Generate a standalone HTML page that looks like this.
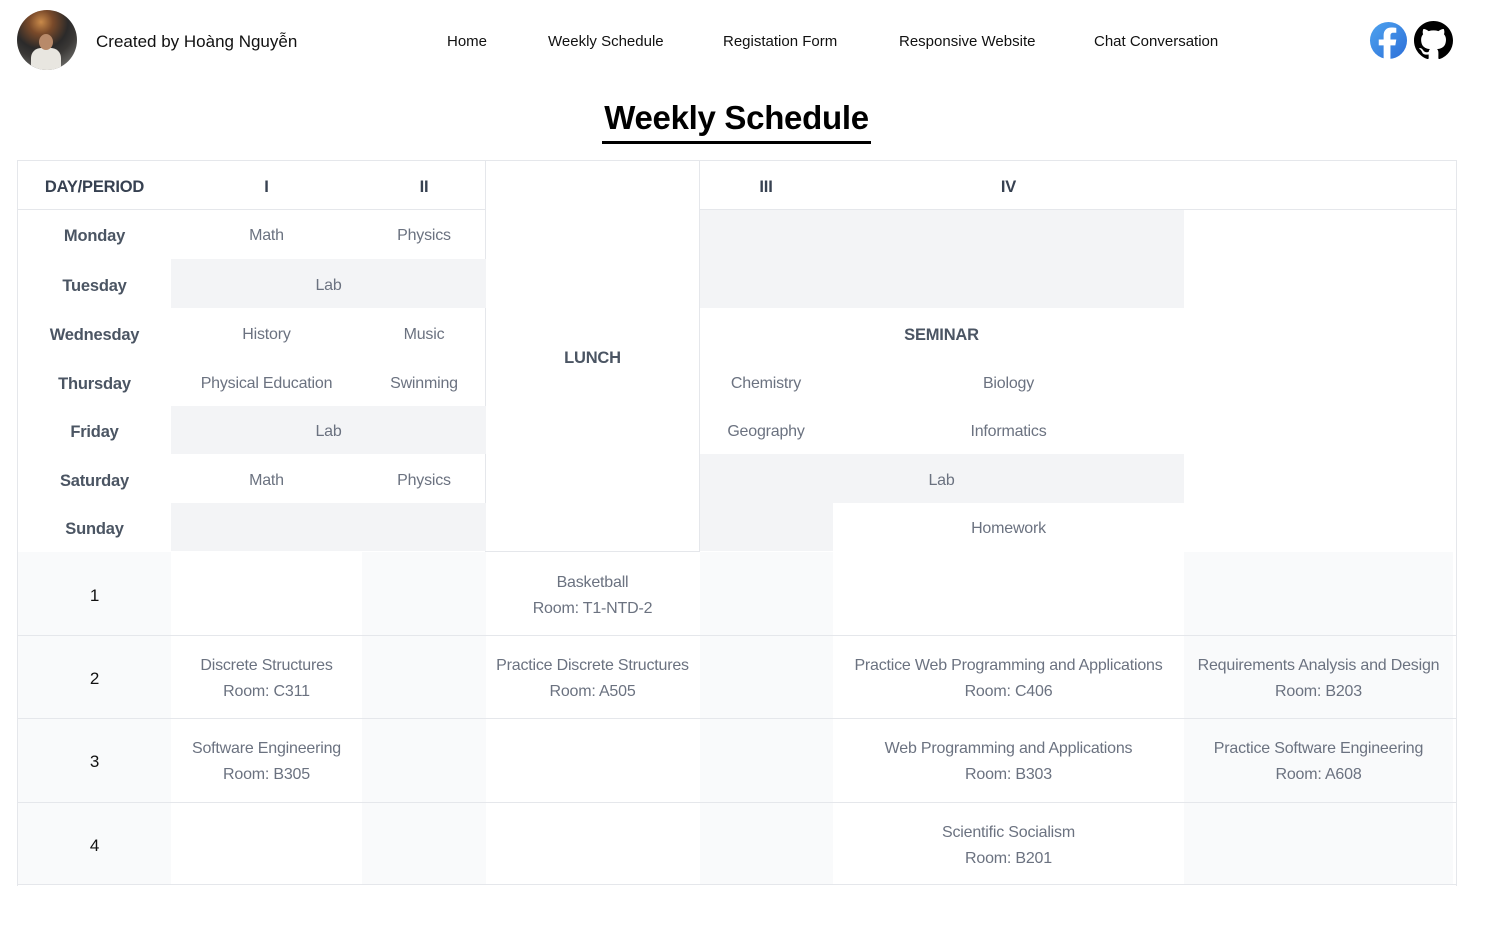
<!DOCTYPE html>
<html><head><meta charset="utf-8">
<style>
*{margin:0;padding:0;box-sizing:border-box}
body{width:1492px;height:926px;background:#fff;font-family:"Liberation Sans",sans-serif;position:relative;overflow:hidden;color:#111}
.a{position:absolute}
.c{position:absolute;display:flex;align-items:center;justify-content:center;text-align:center;flex-direction:column;color:#6b7280;font-size:16px;line-height:26px;letter-spacing:-0.2px;padding-top:4px}
.b{font-weight:bold;color:#4b5563;font-size:16.5px}
.h{font-weight:bold;color:#374151;font-size:16.5px}
.g{background:#f3f4f6}
.l{background:#f9fafb}
.nav{position:absolute;top:33px;font-size:15px;color:#111}
</style></head><body>
<div class="a" style="left:17px;top:10px;width:60px;height:60px;border-radius:50%;background:radial-gradient(circle at 40% 20%,#c98a4a 0,#7a4a2a 20%,#2b2a2a 45%,#3a3836 60%,#8a8a86 100%);overflow:hidden">
 <div class="a" style="left:14px;top:38px;width:30px;height:24px;border-radius:10px 10px 0 0;background:#e8e6e0"></div>
 <div class="a" style="left:22px;top:24px;width:14px;height:16px;border-radius:50%;background:#b88a6a"></div>
</div>
<div class="a" style="left:96px;top:32px;font-size:17px;color:#111">Created by Hoàng Nguyễn</div>
<div class="nav" style="left:447px">Home</div>
<div class="nav" style="left:548px">Weekly Schedule</div>
<div class="nav" style="left:723px">Registation Form</div>
<div class="nav" style="left:899px">Responsive Website</div>
<div class="nav" style="left:1094px">Chat Conversation</div>
<svg class="a" style="left:1369px;top:21px" width="39" height="39" viewBox="0 0 40 40"><defs><linearGradient id="fb" x1="0" y1="0" x2="1" y2="1"><stop offset="0" stop-color="#4ea3ef"/><stop offset="1" stop-color="#2d6fd8"/></linearGradient></defs><circle cx="20" cy="20" r="19" fill="url(#fb)"/><path d="M22 40V25h5l1-6h-6v-4c0-2 1-3 3-3h3V7c-1 0-3-.3-5-.3-5 0-8 3-8 8V19h-5v6h5v15z" fill="#fff"/></svg>
<svg class="a" style="left:1414px;top:21px" width="39" height="39" viewBox="0 0 16 16"><path fill="#000" d="M8 0C3.58 0 0 3.580 0 8c0 3.54 2.29 6.53 5.47 7.590.4.07.55-.17.55-.38 0-.19-.01-.82-.01-1.49-2.01.37-2.53-.49-2.690-.94-.09-.23-.48-.94-.82-1.13-.28-.15-.68-.52-.01-.53.63-.01 1.08.58 1.230.82.72 1.21 1.87.87 2.330.66.07-.52.28-.87.51-1.07-1.78-.2-3.64-.89-3.64-3.95 0-.87.31-1.59.82-2.15-.08-.2-.36-1.02.08-2.12 0 0 .67-.21 2.2.82.64-.18 1.32-.27 2-.27.68 0 1.36.09 2 .27 1.53-1.04 2.2-.82 2.2-.82.44 1.1.16 1.92.08 2.12.51.56.82 1.27.82 2.15 0 3.07-1.87 3.75-3.65 3.95.29.25.54.73.54 1.48 0 1.07-.01 1.93-.01 2.2 0 .21.15.46.55.38A8.013 8.013 0 0016 8c0-4.42-3.58-8-8-8z"/></svg>
<div class="a" style="left:596px;top:99px;width:281px;text-align:center;font-size:33px;font-weight:bold;color:#000;letter-spacing:-0.3px">Weekly Schedule</div>
<div class="a" style="left:602px;top:141px;width:269px;height:3px;background:#000"></div>

<div class="a" style="left:17px;top:160px;width:1440px;height:726px;border:1px solid #e5e7eb;border-bottom:none"></div>
<div class="a" style="left:18px;top:209px;width:468px;height:1px;background:#e5e7eb"></div>
<div class="a" style="left:699px;top:209px;width:757px;height:1px;background:#e5e7eb"></div>
<div class="a" style="left:485px;top:161px;width:215px;height:391px;border-left:1px solid #e5e7eb;border-right:1px solid #e5e7eb;border-bottom:1px solid #e5e7eb"></div>

<div class="a g" style="left:171px;top:259px;width:315px;height:49px"></div>
<div class="a g" style="left:171px;top:406px;width:315px;height:48px"></div>
<div class="a g" style="left:171px;top:503px;width:315px;height:48px"></div>
<div class="a g" style="left:700px;top:210px;width:484px;height:98px"></div>
<div class="a g" style="left:700px;top:454px;width:484px;height:49px"></div>
<div class="a g" style="left:700px;top:503px;width:133px;height:48px"></div>
<div class="a l" style="left:18px;top:552px;width:153px;height:333px"></div>
<div class="a l" style="left:362px;top:552px;width:124px;height:333px"></div>
<div class="a l" style="left:700px;top:552px;width:133px;height:333px"></div>
<div class="a l" style="left:1184px;top:552px;width:269px;height:333px"></div>
<div class="a" style="left:18px;top:635px;width:1438px;height:1px;background:#e5e7eb"></div>
<div class="a" style="left:18px;top:718px;width:1438px;height:1px;background:#e5e7eb"></div>
<div class="a" style="left:18px;top:802px;width:1438px;height:1px;background:#e5e7eb"></div>
<div class="a" style="left:18px;top:884px;width:1438px;height:1px;background:#e5e7eb"></div>

<div class="c h" style="left:18px;top:161px;width:153px;height:48px">DAY/PERIOD</div>
<div class="c h" style="left:171px;top:161px;width:191px;height:48px">I</div>
<div class="c h" style="left:362px;top:161px;width:124px;height:48px">II</div>
<div class="c h" style="left:699px;top:161px;width:134px;height:48px">III</div>
<div class="c h" style="left:833px;top:161px;width:351px;height:48px">IV</div>
<div class="c b" style="left:486px;top:161px;width:213px;height:390px">LUNCH</div>

<div class="c b" style="left:18px;top:209px;width:153px;height:50px">Monday</div>
<div class="c b" style="left:18px;top:259px;width:153px;height:49px">Tuesday</div>
<div class="c b" style="left:18px;top:308px;width:153px;height:49px">Wednesday</div>
<div class="c b" style="left:18px;top:357px;width:153px;height:49px">Thursday</div>
<div class="c b" style="left:18px;top:406px;width:153px;height:48px">Friday</div>
<div class="c b" style="left:18px;top:454px;width:153px;height:49px">Saturday</div>
<div class="c b" style="left:18px;top:503px;width:153px;height:48px">Sunday</div>

<div class="c" style="left:171px;top:209px;width:191px;height:50px">Math</div>
<div class="c" style="left:362px;top:209px;width:124px;height:50px">Physics</div>
<div class="c" style="left:171px;top:259px;width:315px;height:49px">Lab</div>
<div class="c" style="left:171px;top:308px;width:191px;height:49px">History</div>
<div class="c" style="left:362px;top:308px;width:124px;height:49px">Music</div>
<div class="c" style="left:171px;top:357px;width:191px;height:49px">Physical Education</div>
<div class="c" style="left:362px;top:357px;width:124px;height:49px">Swinming</div>
<div class="c" style="left:171px;top:406px;width:315px;height:48px">Lab</div>
<div class="c" style="left:171px;top:454px;width:191px;height:49px">Math</div>
<div class="c" style="left:362px;top:454px;width:124px;height:49px">Physics</div>

<div class="c b" style="left:699px;top:308px;width:485px;height:49px">SEMINAR</div>
<div class="c" style="left:699px;top:357px;width:134px;height:49px">Chemistry</div>
<div class="c" style="left:833px;top:357px;width:351px;height:49px">Biology</div>
<div class="c" style="left:699px;top:406px;width:134px;height:48px">Geography</div>
<div class="c" style="left:833px;top:406px;width:351px;height:48px">Informatics</div>
<div class="c" style="left:699px;top:454px;width:485px;height:49px">Lab</div>
<div class="c" style="left:833px;top:503px;width:351px;height:48px">Homework</div>

<div class="c" style="left:18px;top:552px;width:153px;height:83px;color:#111;font-size:17px">1</div>
<div class="c" style="left:18px;top:635px;width:153px;height:83px;color:#111;font-size:17px">2</div>
<div class="c" style="left:18px;top:718px;width:153px;height:84px;color:#111;font-size:17px">3</div>
<div class="c" style="left:18px;top:802px;width:153px;height:83px;color:#111;font-size:17px">4</div>

<div class="c" style="left:486px;top:552px;width:213px;height:83px"><div>Basketball</div><div>Room: T1-NTD-2</div></div>
<div class="c" style="left:171px;top:635px;width:191px;height:83px"><div>Discrete Structures</div><div>Room: C311</div></div>
<div class="c" style="left:486px;top:635px;width:213px;height:83px"><div>Practice Discrete Structures</div><div>Room: A505</div></div>
<div class="c" style="left:833px;top:635px;width:351px;height:83px"><div>Practice Web Programming and Applications</div><div>Room: C406</div></div>
<div class="c" style="left:1184px;top:635px;width:269px;height:83px"><div>Requirements Analysis and Design</div><div>Room: B203</div></div>
<div class="c" style="left:171px;top:718px;width:191px;height:84px"><div>Software Engineering</div><div>Room: B305</div></div>
<div class="c" style="left:833px;top:718px;width:351px;height:84px"><div>Web Programming and Applications</div><div>Room: B303</div></div>
<div class="c" style="left:1184px;top:718px;width:269px;height:84px"><div>Practice Software Engineering</div><div>Room: A608</div></div>
<div class="c" style="left:833px;top:802px;width:351px;height:83px"><div>Scientific Socialism</div><div>Room: B201</div></div>
</body></html>
